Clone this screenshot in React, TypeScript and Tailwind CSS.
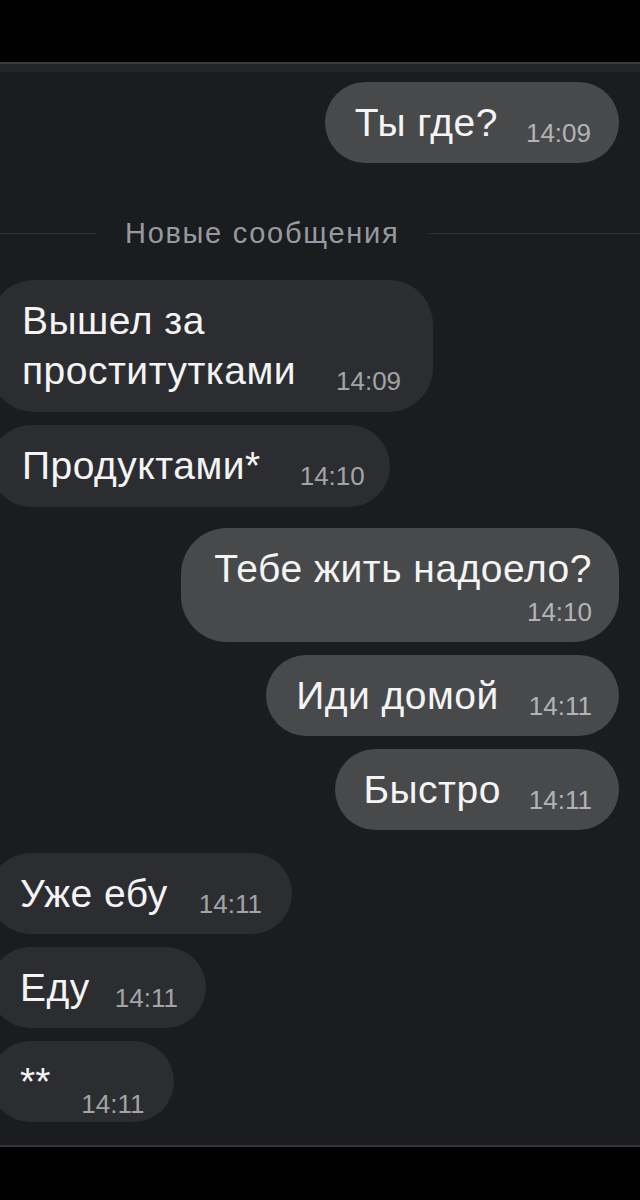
import React from "react";

const font = { fontFamily: "'Liberation Sans', Arial, sans-serif" };

export default function App() {
  return (
    <div className="w-[640px] h-[1200px] bg-black flex flex-col overflow-hidden" style={font}>
      <div className="h-[62px] bg-black shrink-0" />
      <div className="h-[10px] shrink-0 border-t-2 border-[#3a3b3d] bg-[#232426]" />
      <div className="h-[1073px] shrink-0 bg-[#1b1c1e] flex flex-col overflow-hidden">
        {/* Ты где? */}
        <div className="self-end mr-[21px] mt-[10px] h-[81px] rounded-full bg-[#48494b] pl-[30px] pr-[28px] flex items-baseline pt-[19px]">
          <span className="text-[39px] leading-[44px] tracking-[0.5px] text-[#f4f4f4]">Ты где?</span>
          <span className="ml-[28px] text-[26px] text-[#b2b3b5] translate-y-[6px]">14:09</span>
        </div>

        {/* divider */}
        <div className="mt-[55px] h-[30px] flex items-center">
          <div className="w-[96px] h-px bg-[#2f3033]" />
          <span className="ml-[29px] text-[29px] leading-[30px] tracking-[1.7px] text-[#969aa0]">Новые сообщения</span>
          <div className="ml-[30px] flex-1 h-px bg-[#2f3033]" />
        </div>

        {/* Вышел за проститутками */}
        <div className="self-start -ml-[10px] mt-[32px] h-[132px] rounded-[44px] bg-[#2c2d30] pl-[32px] pr-[32px] py-[16px]">
          <div className="text-[39px] leading-[50px] tracking-[0.5px] text-[#f4f4f4]">Вышел за</div>
          <div className="flex items-baseline">
            <span className="text-[39px] leading-[50px] tracking-[0.5px] text-[#f4f4f4]">проститутками</span>
            <span className="ml-[40px] text-[26px] text-[#a3a4a6] translate-y-[6px]">14:09</span>
          </div>
        </div>

        {/* Продуктами* */}
        <div className="self-start -ml-[10px] mt-[13px] h-[82px] rounded-full bg-[#2c2d30] pl-[32px] pr-[25px] flex items-baseline pt-[19px]">
          <span className="text-[39px] leading-[44px] tracking-[0.5px] text-[#f4f4f4]">Продуктами*</span>
          <span className="ml-[39px] text-[26px] text-[#a3a4a6] translate-y-[6px]">14:10</span>
        </div>

        {/* Тебе жить надоело? */}
        <div className="self-end mr-[21px] mt-[21px] h-[114px] rounded-[46px] bg-[#48494b] pl-[33px] pr-[27px] pt-[21px] flex flex-col items-end">
          <span className="text-[39px] leading-[40px] tracking-[0.5px] text-[#f4f4f4]">Тебе жить надоело?</span>
          <span className="mt-[9px] text-[26px] leading-[28px] text-[#b2b3b5]">14:10</span>
        </div>

        {/* Иди домой */}
        <div className="self-end mr-[21px] mt-[13px] h-[81px] rounded-full bg-[#48494b] pl-[30px] pr-[27px] flex items-baseline pt-[19px]">
          <span className="text-[39px] leading-[44px] tracking-[0.5px] text-[#f4f4f4]">Иди домой</span>
          <span className="ml-[30px] text-[26px] text-[#b2b3b5] translate-y-[6px]">14:11</span>
        </div>

        {/* Быстро */}
        <div className="self-end mr-[21px] mt-[13px] h-[81px] rounded-full bg-[#48494b] pl-[28px] pr-[27px] flex items-baseline pt-[19px]">
          <span className="text-[39px] leading-[44px] tracking-[0.5px] text-[#f4f4f4]">Быстро</span>
          <span className="ml-[28px] text-[26px] text-[#b2b3b5] translate-y-[6px]">14:11</span>
        </div>

        {/* Уже ебу */}
        <div className="self-start -ml-[10px] mt-[23px] h-[81px] rounded-full bg-[#2c2d30] pl-[30px] pr-[30px] flex items-baseline pt-[19px]">
          <span className="text-[39px] leading-[44px] tracking-[0.5px] text-[#f4f4f4]">Уже ебу</span>
          <span className="ml-[31px] text-[26px] text-[#a3a4a6] translate-y-[6px]">14:11</span>
        </div>

        {/* Еду */}
        <div className="self-start -ml-[10px] mt-[13px] h-[81px] rounded-full bg-[#2c2d30] pl-[30px] pr-[28px] flex items-baseline pt-[19px]">
          <span className="text-[39px] leading-[44px] tracking-[0.5px] text-[#f4f4f4]">Еду</span>
          <span className="ml-[25px] text-[26px] text-[#a3a4a6] translate-y-[6px]">14:11</span>
        </div>

        {/* ** */}
        <div className="self-start -ml-[10px] mt-[13px] h-[81px] rounded-full bg-[#2c2d30] pl-[30px] pr-[29px] flex items-baseline pt-[19px]">
          <span className="text-[39px] leading-[44px] text-[#f4f4f4]">**</span>
          <span className="ml-[31px] text-[26px] text-[#a3a4a6] translate-y-[18px]">14:11</span>
        </div>
      </div>
      <div className="h-[2px] shrink-0 bg-[#36373a]" />
      <div className="flex-1 bg-black" />
    </div>
  );
}
